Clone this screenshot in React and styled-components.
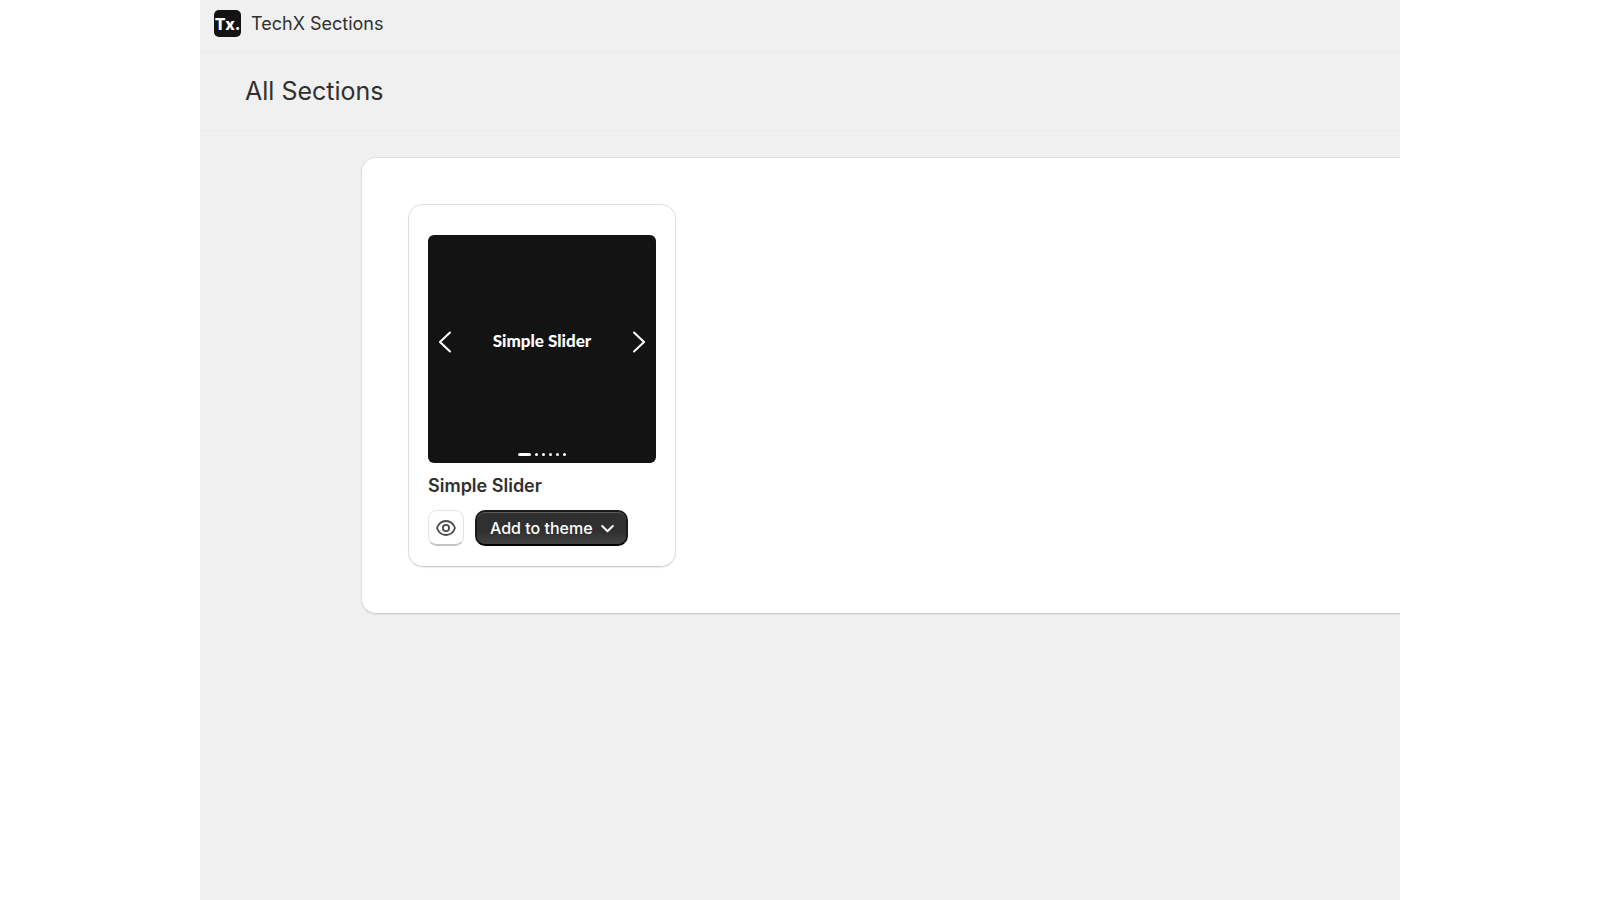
import React from 'react';
import styled, {createGlobalStyle} from 'styled-components';

const sections = [
  {name: 'Simple Slider', slides: 6},
];

const Chevron = ({flip}) => (
  <svg width='12' height='22' viewBox='0 0 12 22' fill='none' stroke='#fff' strokeWidth='2' strokeLinecap='round' aria-hidden='true'>
    <path d={flip ? 'M1 1.5L11 11L1 20.5' : 'M11 1.5L1 11L11 20.5'} />
  </svg>
);

const EyeIcon = () => (
  <svg width='20' height='18' viewBox='0 0 20 18' fill='none' stroke='#4a4a4a' strokeWidth='1.8' aria-hidden='true'>
    <path d='M1 9C2.6 4.6 5.8 2 10 2S17.4 4.6 19 9C17.4 13.4 14.2 16 10 16S2.6 13.4 1 9Z' strokeLinejoin='round' />
    <circle cx='10' cy='9' r='3.1' />
  </svg>
);

const DownIcon = () => (
  <svg width='13' height='10' viewBox='0 0 13 10' fill='none' stroke='#fff' strokeWidth='2' strokeLinecap='round' strokeLinejoin='round' aria-hidden='true'>
    <path d='M1.2 3L6.5 8.3L11.8 3' />
  </svg>
);

const SectionCard = ({name, slides}) => (
  <Card>
    <Preview>
      <ArrowButton aria-label='Previous slide'><Chevron /></ArrowButton>
      <PreviewText>{name}</PreviewText>
      <ArrowButton aria-label='Next slide'><Chevron flip /></ArrowButton>
      <Dots>
        {Array.from({length: slides}, (_, i) => (
          <Dot key={i} $active={i === 0} />
        ))}
      </Dots>
    </Preview>
    <CardTitle>{name}</CardTitle>
    <Actions>
      <IconButton aria-label={`Preview ${name}`}><EyeIcon /></IconButton>
      <PrimaryButton>Add to theme <DownIcon /></PrimaryButton>
    </Actions>
  </Card>
);

const App = () => {
  return (
    <Page>
      <GlobalStyle />
      <Frame>
        <TopBar>
          <Logo>Tx.</Logo>
          <span>TechX Sections</span>
        </TopBar>
        <TitleBar>
          <h1>All Sections</h1>
        </TitleBar>
        <Panel>
          {sections.map((section) => (
            <SectionCard key={section.name} {...section} />
          ))}
        </Panel>
      </Frame>
    </Page>
  );
};

export default App;

const GlobalStyle = createGlobalStyle`
  * {
    box-sizing: border-box;
  }
  body {
    margin: 0;
    background: #fff;
    color: #303030;
    font-family: Inter, "Liberation Sans", sans-serif;
  }
  button {
    font-family: inherit;
    cursor: pointer;
  }
`;

const Page = styled.div`
  min-height: 100vh;
  padding: 0 12.5%;
  display: flex;
`;

const Frame = styled.main`
  flex: 1;
  min-width: 0;
  background: #f0f0f0;
  overflow: hidden;
`;

const TopBar = styled.header`
  display: flex;
  align-items: center;
  gap: 10px;
  height: 52px;
  padding: 0 14px 4px;
  border-bottom: 1px solid #ebebeb;
  font-size: 18px;
  line-height: 24px;
`;

const Logo = styled.span`
  display: flex;
  align-items: center;
  justify-content: center;
  width: 27px;
  height: 27px;
  border-radius: 5px;
  background: #131313;
  color: #fff;
  font-size: 16px;
  font-weight: 800;
`;

const TitleBar = styled.div`
  padding: 22px 45px;
  border-bottom: 1px solid #ebebeb;

  h1 {
    margin: 0;
    font-size: 25px;
    font-weight: 400;
    line-height: 34px;
  }
`;

const Panel = styled.section`
  display: flex;
  flex-wrap: wrap;
  gap: 24px;
  margin: 26px -40px 0 161px;
  padding: 46px;
  background: #fff;
  border: 1px solid #dfdfdf;
  border-bottom-color: #cfcfcf;
  border-radius: 15px;
  box-shadow: 0 1px 1px #dedede;
`;

const Card = styled.article`
  width: 268px;
  padding: 30px 19px 20px;
  border: 1px solid #dedede;
  border-bottom-color: #cfcfcf;
  border-radius: 15px;
  box-shadow: 0 1px 1px #ececec;
`;

const Preview = styled.div`
  display: grid;
  grid-template-columns: auto 1fr auto;
  grid-template-rows: 1fr auto;
  align-items: center;
  height: 228px;
  padding: 0 11px 7px;
  border-radius: 6px;
  background: #131313;
`;

const ArrowButton = styled.button`
  display: flex;
  padding: 0 0 4px;
  border: 0;
  background: none;
`;

const PreviewText = styled.span`
  padding-bottom: 6px;
  color: #fff;
  font-family: Lato, "Liberation Sans", sans-serif;
  font-size: 17px;
  font-weight: 900;
  line-height: 24px;
  text-align: center;
`;

const Dots = styled.div`
  grid-column: 1 / -1;
  display: flex;
  align-items: center;
  justify-content: center;
  gap: 4px;
`;

const Dot = styled.span`
  width: ${({$active}) => ($active ? '13px' : '3px')};
  height: 3px;
  border-radius: 2px;
  background: #fff;
`;

const CardTitle = styled.h2`
  margin: 11px 0 12px;
  font-size: 18px;
  font-weight: 600;
  line-height: 24px;
`;

const Actions = styled.div`
  display: flex;
  align-items: center;
  gap: 11px;
`;

const IconButton = styled.button`
  display: flex;
  align-items: center;
  justify-content: center;
  width: 36px;
  height: 36px;
  padding: 0;
  border: 1px solid #e3e3e3;
  border-bottom: 2px solid #c4c4c4;
  border-radius: 9px;
  background: #fff;
`;

const PrimaryButton = styled.button`
  display: flex;
  align-items: center;
  gap: 8px;
  height: 36px;
  padding: 0 12px 0 13px;
  border: 2px solid #1a1a1a;
  border-bottom-color: #000;
  border-radius: 10px;
  background: linear-gradient(#303030 60%, #434343);
  box-shadow: inset 0 1px 0 #5c5c5c;
  color: #fff;
  font-size: 16px;
  font-weight: 500;
  line-height: 20px;
`;
